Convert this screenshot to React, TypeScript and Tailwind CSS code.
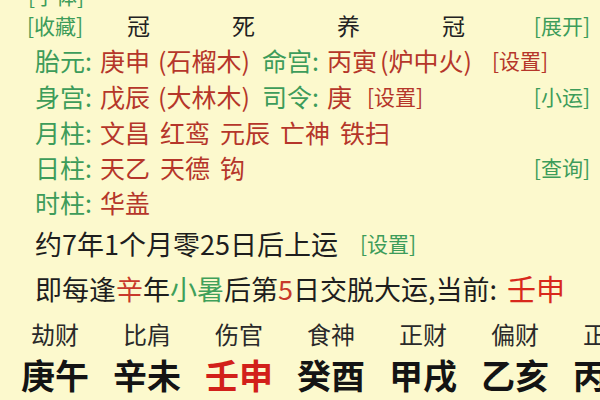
import React from "react";

const G = "text-[#3d9c5a]";
const R = "text-[#b5362a]";

function Seg({ w, cls, children }: { w?: string; cls: string; children: React.ReactNode }) {
  return <span className={`shrink-0 whitespace-nowrap ${w ?? ""} ${cls}`}>{children}</span>;
}

export default function App() {
  const labels = ["劫财", "比肩", "伤官", "食神", "正财", "偏财", "正官"];
  const pillars = [
    { t: "庚午", red: false },
    { t: "辛未", red: false },
    { t: "壬申", red: true },
    { t: "癸酉", red: false },
    { t: "甲戌", red: false },
    { t: "乙亥", red: false },
    { t: "丙子", red: false },
  ];
  return (
    <div className="w-[600px] h-[400px] overflow-hidden bg-[#fcf9cd] font-['Noto_Sans_CJK_SC',sans-serif] leading-none">
      <div className="flex flex-col -mt-[18px]">
        {/* row 0 */}
        <div className="h-[26px] flex items-center pl-[28px]">
          <span className={`text-[21px] ${G}`}>[字体]</span>
        </div>
        {/* row 1 */}
        <div className="h-[34px] flex items-center pl-[27px] pr-[10px]">
          <span className={`w-[59px] shrink-0 text-[21px] ${G}`}>[收藏]</span>
          {["冠", "死", "养", "冠"].map((c, i) => (
            <span key={i} className="w-[105px] shrink-0 text-center text-[23px] text-[#222]">
              {c}
            </span>
          ))}
          <span className={`ml-auto text-[21px] ${G}`}>[展开]</span>
        </div>
        {/* row 2 */}
        <div className="h-[36px] flex items-center pl-[35px] text-[25px]">
          <Seg w="w-[65px]" cls={G}>胎元:</Seg>
          <Seg w="w-[58px]" cls={R}>庚申</Seg>
          <Seg w="w-[104px]" cls={R}>(石榴木)</Seg>
          <Seg w="w-[65px]" cls={G}>命宫:</Seg>
          <Seg w="w-[53px]" cls={R}>丙寅</Seg>
          <Seg w="w-[112px]" cls={R}>(炉中火)</Seg>
          <Seg cls={`${R} text-[21px]`}>[设置]</Seg>
        </div>
        {/* row 3 */}
        <div className="h-[36px] flex items-center pl-[35px] pr-[10px] text-[25px]">
          <Seg w="w-[65px]" cls={G}>身宫:</Seg>
          <Seg w="w-[58px]" cls={R}>戊辰</Seg>
          <Seg w="w-[104px]" cls={R}>(大林木)</Seg>
          <Seg w="w-[65px]" cls={G}>司令:</Seg>
          <Seg w="w-[40px]" cls={R}>庚</Seg>
          <Seg cls={`${R} text-[21px]`}>[设置]</Seg>
          <span className={`ml-auto text-[21px] ${G}`}>[小运]</span>
        </div>
        {/* row 4 */}
        <div className="h-[36px] flex items-center pl-[35px] text-[25px]">
          <Seg w="w-[65px]" cls={G}>月柱:</Seg>
          <div className={`flex gap-[10px] ${R}`}>
            <span>文昌</span>
            <span>红鸾</span>
            <span>元辰</span>
            <span>亡神</span>
            <span>铁扫</span>
          </div>
        </div>
        {/* row 5 */}
        <div className="h-[34px] flex items-center pl-[35px] pr-[10px] text-[25px]">
          <Seg w="w-[65px]" cls={G}>日柱:</Seg>
          <div className={`flex gap-[10px] ${R}`}>
            <span>天乙</span>
            <span>天德</span>
            <span>钩</span>
          </div>
          <span className={`ml-auto text-[21px] ${G}`}>[查询]</span>
        </div>
        {/* row 6 */}
        <div className="h-[36px] flex items-center pl-[35px] text-[25px]">
          <Seg w="w-[65px]" cls={G}>时柱:</Seg>
          <span className={R}>华盖</span>
        </div>
        {/* row 7 */}
        <div className="h-[46px] flex items-center pl-[35px] text-[27px] text-[#1e1e1e]">
          <span className="whitespace-nowrap">约7年1个月零25日后上运</span>
          <span className={`ml-[22px] text-[21px] ${G}`}>[设置]</span>
        </div>
        {/* row 8 */}
        <div className="h-[44px] flex items-center pl-[35px] text-[27px] text-[#1e1e1e] whitespace-nowrap">
          <span>即每逢</span>
          <span className="text-[#c8392b]">辛</span>
          <span>年</span>
          <span className="text-[#3fa05a]">小暑</span>
          <span>后第</span>
          <span className="text-[#c8392b]">5</span>
          <span>日交脱大运,当前:</span>
          <span className="ml-[10px] text-[29px] text-[#d8281c]">壬申</span>
        </div>
        {/* row 9 */}
        <div className="h-[48px] flex items-center pl-[9px] text-[24px] text-[#2a2a2a]">
          {labels.map((l, i) => (
            <span key={i} className="w-[92px] shrink-0 text-center">
              {l}
            </span>
          ))}
        </div>
        {/* row 10 */}
        <div className="h-[34px] flex items-center pl-[9px] text-[34px] font-bold">
          {pillars.map((p, i) => (
            <span
              key={i}
              className={`w-[92px] shrink-0 text-center ${p.red ? "text-[#d2201a]" : "text-[#141414]"}`}
            >
              {p.t}
            </span>
          ))}
        </div>
      </div>
    </div>
  );
}
